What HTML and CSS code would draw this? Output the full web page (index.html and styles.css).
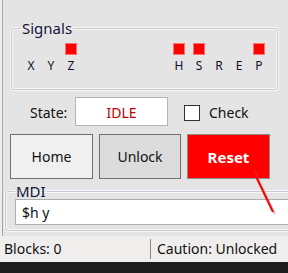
FILE: index.html
```html
<!DOCTYPE html>
<html>
<head>
  <title>Control</title>
  <link rel="stylesheet" href="styles.css">
</head>
<body>
  <div class="window">
    <fieldset class="group signals">
      <legend>Signals</legend>
      <div class="signal-row">
        <div class="signal-set">
          <div class="signal"><span class="led"></span><span class="name">X</span></div>
          <div class="signal"><span class="led"></span><span class="name">Y</span></div>
          <div class="signal"><span class="led on"></span><span class="name">Z</span></div>
        </div>
        <div class="signal-set">
          <div class="signal"><span class="led on"></span><span class="name">H</span></div>
          <div class="signal"><span class="led on"></span><span class="name">S</span></div>
          <div class="signal"><span class="led"></span><span class="name">R</span></div>
          <div class="signal"><span class="led"></span><span class="name">E</span></div>
          <div class="signal"><span class="led on"></span><span class="name">P</span></div>
        </div>
      </div>
    </fieldset>

    <div class="state-row">
      <span class="state-label">State:</span>
      <div class="state-box">IDLE</div>
      <label class="check"><span class="check-box"></span>Check</label>
    </div>

    <div class="buttons">
      <button class="btn">Home</button>
      <button class="btn btn-down">Unlock</button>
      <button class="btn btn-reset">Reset</button>
    </div>

    <fieldset class="group mdi">
      <legend>MDI</legend>
      <input class="mdi-input" type="text" value="$h y">
    </fieldset>
  </div>

  <div class="statusbar">
    <div class="status-cell blocks">Blocks: 0</div>
    <div class="status-cell">Caution: Unlocked</div>
  </div>
  <div class="taskbar"></div>

  <!-- red pointer line over the Reset button -->
  <svg class="pointer" width="288" height="273" viewBox="0 0 288 273">
    <line x1="253" y1="169" x2="275" y2="214" stroke="#8a8a8a" stroke-width="2" opacity="0.5"/>
    <line x1="252" y1="168" x2="273" y2="212" stroke="#ff0000" stroke-width="2"/>
  </svg>
</body>
</html>
```

FILE: styles.css
```css
html, body {
  margin: 0;
  padding: 0;
}

body {
  position: relative;
  width: 288px;
  height: 273px;
  overflow: hidden;
  background: #ededed;
  font-family: "Noto Sans", "Open Sans", sans-serif;
  font-size: 14px;
  color: #111;
}

.window {
  height: 236px;
  margin-left: 2px;
  border-left: 1px solid #a8a8a8;
  background: #e4e4e4;
  overflow: hidden;
}

.group {
  margin: 0;
  border: 1px solid #c9c9c9;
  border-radius: 3px;
  box-shadow: 0 0 0 1px #f7f7f7, inset 0 0 0 1px #f7f7f7;
}

.group legend {
  padding: 0 1px;
  line-height: 18px;
  font-size: 15px;
  color: #14143a;
}

.signals {
  margin: 19px 10px 0 8px;
  padding: 6px 8px 16px 9px;
}

.signal-row {
  display: flex;
  justify-content: space-between;
}

.signal-set {
  display: flex;
}

.signal {
  width: 20px;
  display: flex;
  flex-direction: column;
  align-items: center;
}

.led {
  width: 12px;
  height: 12px;
  box-sizing: border-box;
}

.led.on {
  background: #ff0000;
  border: 1px solid #ff7070;
}

.name {
  margin-top: 4px;
  font-size: 12px;
  line-height: 14px;
  color: #10102a;
}

.state-row {
  display: flex;
  align-items: center;
  margin-top: 7px;
  padding-left: 27px;
  height: 29px;
}

.state-label {
  width: 45px;
  padding-top: 2px;
}

.state-box {
  width: 93px;
  height: 29px;
  box-sizing: border-box;
  border: 1px solid #b4b4b4;
  background: #fff;
  color: #c00000;
  text-align: center;
  line-height: 27px;
  padding-top: 1px;
}

.check {
  display: flex;
  align-items: center;
  margin-left: 16px;
  padding-top: 2px;
}

.check-box {
  width: 16px;
  height: 16px;
  box-sizing: border-box;
  border: 1px solid #333;
  background: #fff;
  margin-right: 9px;
}

.buttons {
  display: flex;
  gap: 6px;
  margin: 8px 0 0 7px;
}

.btn {
  width: 83px;
  height: 45px;
  box-sizing: border-box;
  border: 1px solid #707070;
  background: #f0f0f0;
  font-family: "Noto Sans", "Open Sans", sans-serif;
  font-size: 14px;
  color: #111;
  padding: 0;
}

.btn-down {
  width: 82px;
  background: #dcdcdc;
}

.btn-reset {
  background: #ff0000;
  border-color: #8c8c8c;
  color: #fff;
  font-weight: bold;
  font-size: 15px;
}

.mdi {
  margin: 3px -20px 0 2px;
  padding: 0 0 5px 9px;
  border-color: #c3cbd6;
}

.mdi-input {
  display: block;
  width: 300px;
  height: 26px;
  box-sizing: border-box;
  margin-top: -1px;
  border: 1px solid #adadad;
  background: #fff;
  padding: 0 6px;
  font-family: "Noto Sans", "Open Sans", sans-serif;
  font-size: 14px;
  color: #111;
  outline: none;
}

.statusbar {
  display: flex;
  height: 26px;
  background: #f0eeed;
  align-items: center;
}

.status-cell {
  padding-left: 6px;
  line-height: 20px;
}

.blocks {
  width: 146px;
  padding-left: 4px;
  border-right: 1px solid #8a8a8a;
}

.taskbar {
  height: 11px;
  background: #1c1c1c;
}

.pointer {
  position: absolute;
  left: 0;
  top: 0;
  pointer-events: none;
}
```
